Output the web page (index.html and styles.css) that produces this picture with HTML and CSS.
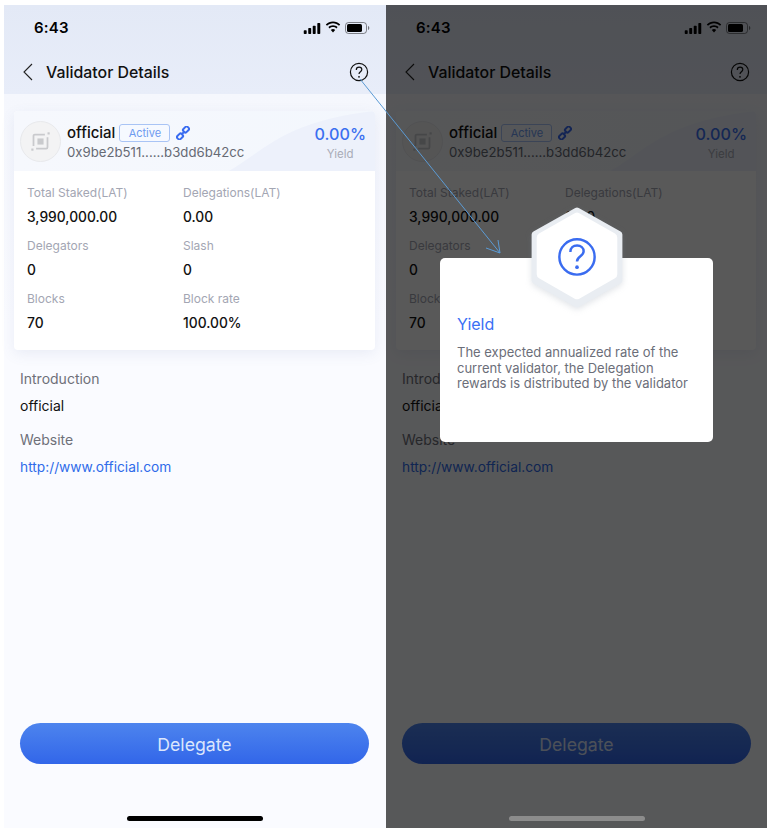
FILE: index.html
```html
<!DOCTYPE html>
<html lang="en">
<head>
<meta charset="utf-8">
<title>Validator Details</title>
<link rel="stylesheet" href="styles.css">
</head>
<body>
<svg class="defs" width="0" height="0" aria-hidden="true">
  <symbol id="signal" viewBox="0 0 18 12"><rect x="0" y="8" width="3.200" height="4" rx=".8"/><rect x="4.900" y="5.500" width="3.200" height="6.500" rx=".8"/><rect x="9.800" y="3" width="3.200" height="9" rx=".8"/><rect x="14.800" y="0" width="3.200" height="12" rx=".8"/></symbol>
  <symbol id="wifi" viewBox="0 0 16 12"><path d="M8 2.300c2.300 0 4.400.9 6 2.400l1.200-1.300C13.300 1.500 10.800.4 8 .4S2.700 1.500.8 3.400L2 4.700c1.600-1.500 3.700-2.400 6-2.400z"/><path d="M8 6c1.300 0 2.500.5 3.400 1.400l1.200-1.300C11.400 4.900 9.800 4.200 8 4.200s-3.400.7-4.600 1.900l1.200 1.300C5.500 6.500 6.700 6 8 6z"/><path d="M8 8c-.9 0-1.600.3-2.200.9L8 11.500l2.200-2.600C9.600 8.300 8.900 8 8 8z"/></symbol>
  <symbol id="battery" viewBox="0 0 25 12"><rect x=".5" y=".5" width="21" height="11" rx="3" fill="none" stroke="currentColor" stroke-opacity=".45"/><rect x="2" y="2" width="15" height="8" rx="1.600"/><path d="M23 4v4c.8-.3 1.300-1.100 1.300-2S23.800 4.300 23 4z" opacity=".5"/></symbol>
  <symbol id="back" viewBox="0 0 12 20"><path d="M10 2 2 10l8 8" fill="none" stroke="currentColor" stroke-width="1.100"/></symbol>
  <symbol id="help" viewBox="0 0 20 20"><circle cx="10" cy="10" r="8.600" fill="none" stroke="currentColor" stroke-width="1.200"/><path d="M7.300 7.900c0-1.600 1.200-2.700 2.800-2.700s2.700 1 2.700 2.400c0 2.300-2.800 2.100-2.800 4.500" fill="none" stroke="currentColor" stroke-width="1.200"/><circle cx="10" cy="14.800" r=".9" fill="currentColor"/></symbol>
  <symbol id="logo" viewBox="0 0 24 24"><path d="M17 4H5.500A1.500 1.500 0 0 0 4 5.500V17M7 20h11.500a1.500 1.500 0 0 0 1.500-1.500V7" fill="none" stroke="currentColor" stroke-width="2"/><rect x="8.500" y="8.500" width="7" height="7"/><rect x="20" y="1.500" width="2.500" height="2.500"/><rect x="1.500" y="20" width="2.500" height="2.500"/></symbol>
  <symbol id="link" viewBox="0 0 14 14"><g fill="none" stroke="currentColor" stroke-width="2"><rect x="7" y="1.300" width="6" height="4.400" rx="1.500" transform="rotate(-45 10 3.500)"/><rect x="1" y="8.300" width="6" height="4.400" rx="1.500" transform="rotate(-45 4 10.500)"/><path d="M5.200 8.800l3.600-3.600"/></g></symbol>
  <symbol id="wave" viewBox="0 0 361 60" preserveAspectRatio="none"><path d="M215 60C250 40 270 10 361 0v60z" fill="#edf1fb"/></symbol>
</svg>

<main class="canvas">
  <section class="phone">
    <header class="top">
      <div class="status">
        <span class="time">6:43</span>
        <span class="status-icons">
          <svg class="ic-signal"><use href="#signal"/></svg>
          <svg class="ic-wifi"><use href="#wifi"/></svg>
          <svg class="ic-battery"><use href="#battery"/></svg>
        </span>
      </div>
      <nav class="nav">
        <svg class="ic-back"><use href="#back"/></svg>
        <h1 class="title">Validator Details</h1>
        <svg class="ic-help"><use href="#help"/></svg>
      </nav>
    </header>
    <div class="content">
      <article class="card">
        <div class="card-head">
          <svg class="wave"><use href="#wave"/></svg>
          <div class="avatar"><svg class="ic-logo"><use href="#logo"/></svg></div>
          <div class="identity">
            <div class="name-row"><span class="name">official</span><span class="badge">Active</span><svg class="ic-link"><use href="#link"/></svg></div>
            <div class="address">0x9be2b511......b3dd6b42cc</div>
          </div>
          <div class="yield"><div class="yield-value">0.00%</div><div class="yield-label">Yield</div></div>
        </div>
        <dl class="stats">
          <div><dt>Total Staked(LAT)</dt><dd>3,990,000.00</dd></div>
          <div><dt>Delegations(LAT)</dt><dd>0.00</dd></div>
          <div><dt>Delegators</dt><dd>0</dd></div>
          <div><dt>Slash</dt><dd>0</dd></div>
          <div><dt>Blocks</dt><dd>70</dd></div>
          <div><dt>Block rate</dt><dd>100.00%</dd></div>
        </dl>
      </article>
      <div class="info">
        <div class="info-label">Introduction</div>
        <div class="info-value">official</div>
        <div class="info-label">Website</div>
        <a class="info-link" href="#">http://www.official.com</a>
      </div>
    </div>
    <button class="delegate" type="button">Delegate</button>
    <div class="home"></div>
  </section>

  <section class="phone">
    <header class="top">
      <div class="status">
        <span class="time">6:43</span>
        <span class="status-icons">
          <svg class="ic-signal"><use href="#signal"/></svg>
          <svg class="ic-wifi"><use href="#wifi"/></svg>
          <svg class="ic-battery"><use href="#battery"/></svg>
        </span>
      </div>
      <nav class="nav">
        <svg class="ic-back"><use href="#back"/></svg>
        <h1 class="title">Validator Details</h1>
        <svg class="ic-help"><use href="#help"/></svg>
      </nav>
    </header>
    <div class="content">
      <article class="card">
        <div class="card-head">
          <svg class="wave"><use href="#wave"/></svg>
          <div class="avatar"><svg class="ic-logo"><use href="#logo"/></svg></div>
          <div class="identity">
            <div class="name-row"><span class="name">official</span><span class="badge">Active</span><svg class="ic-link"><use href="#link"/></svg></div>
            <div class="address">0x9be2b511......b3dd6b42cc</div>
          </div>
          <div class="yield"><div class="yield-value">0.00%</div><div class="yield-label">Yield</div></div>
        </div>
        <dl class="stats">
          <div><dt>Total Staked(LAT)</dt><dd>3,990,000.00</dd></div>
          <div><dt>Delegations(LAT)</dt><dd>0.00</dd></div>
          <div><dt>Delegators</dt><dd>0</dd></div>
          <div><dt>Slash</dt><dd>0</dd></div>
          <div><dt>Blocks</dt><dd>70</dd></div>
          <div><dt>Block rate</dt><dd>100.00%</dd></div>
        </dl>
      </article>
      <div class="info">
        <div class="info-label">Introduction</div>
        <div class="info-value">official</div>
        <div class="info-label">Website</div>
        <a class="info-link" href="#">http://www.official.com</a>
      </div>
    </div>
    <button class="delegate" type="button">Delegate</button>
    <div class="home"></div>
    <div class="scrim"></div>
    <div class="modal">
      <svg class="hex" viewBox="0 0 90 100">
        <polygon class="hex-shadow" points="45,4 86,27 86,72 45,95 4,72 4,27"/>
        <polygon class="hex-face" points="45,10 80,30 80,66 45,86 10,66 10,30"/>
        <g class="hex-mark">
          <circle cx="45" cy="49" r="17.300"/>
          <path d="M38.500 44c0-3.800 2.800-6.300 6.600-6.300 3.700 0 6.400 2.400 6.400 5.700 0 5-6.500 4.700-6.500 10"/>
          <circle class="hex-dot" cx="45" cy="59" r="1.800"/>
        </g>
      </svg>
      <h2 class="modal-title">Yield</h2>
      <p class="modal-text">The expected annualized rate of the current validator, the Delegation rewards is distributed by the validator</p>
    </div>
  </section>

  <svg class="arrow" viewBox="0 0 767 831">
    <path d="M360 79 500 253M486 248l14 5-2-13"/>
  </svg>
</main>
</body>
</html>
```
FILE: styles.css
```css
* { box-sizing: border-box; }
html, body { margin: 0; height: 100%; background: #fff; overflow: hidden; }
body { font-family: Inter, "Liberation Sans", sans-serif; color: #000; }
.defs { position: absolute; }

.canvas { position: relative; display: flex; width: 767px; height: 831px; padding: 5px 0 3px 4px; }
.phone { position: relative; display: flex; flex-direction: column; flex: 0 0 382px; height: 823px; background: linear-gradient(180deg, #f5f7fd 90px, #fafbff 320px); overflow: visible; }
.phone + .phone { flex-basis: 381px; }

.top { height: 89px; background: linear-gradient(180deg, #e3e9f6 0%, #e8edf9 100%); }
.status { display: flex; justify-content: space-between; align-items: center; height: 46px; padding: 0 16px 0 30px; }
.time { font-size: 15px; font-weight: 600; letter-spacing: .2px; margin-top: -1px; }
.status-icons { display: flex; align-items: center; gap: 4px; }
.ic-signal { width: 18px; height: 11px; fill: #000; }
.ic-wifi { width: 16px; height: 12px; fill: #000; margin-top: -2px; }
.ic-battery { width: 25px; height: 12px; fill: #000; color: #000; }

.nav { display: flex; align-items: center; height: 42px; padding: 0 17px 0 18px; }
.ic-back { width: 12px; height: 20px; color: #222; flex: none; }
.title { flex: 1; margin: 0 0 0 12px; font-size: 15.900px; font-weight: 500; color: #111; }
.ic-help { width: 20px; height: 20px; color: #111; flex: none; }

.content { padding: 17px 11px 0 10px; }
.card { background: #fff; border-radius: 4px; box-shadow: 0 4px 14px rgba(90, 110, 170, .1); }
.card-head { position: relative; display: flex; align-items: center; height: 60px; padding: 0 9px 0 6px; border-radius: 4px 4px 0 0; overflow: hidden; background: linear-gradient(90deg, #f6f8fd 0%, #f3f7fd 100%); }
.wave { position: absolute; inset: 0; width: 100%; height: 100%; }
.avatar, .identity, .yield { position: relative; }
.avatar { display: flex; align-items: center; justify-content: center; width: 41px; height: 41px; border-radius: 50%; background: #f3f3f4; border: 1px solid #e8e9ec; flex: none; }
.ic-logo { width: 21px; height: 21px; fill: #c9cacd; color: #c9cacd; }
.identity { flex: 1; margin-left: 6px; padding-top: 1px; }
.name-row { display: flex; align-items: center; height: 20px; }
.name { font-size: 15px; font-weight: 500; color: #111; }
.badge { display: flex; align-items: center; justify-content: center; width: 51px; height: 18px; margin-left: 4px; border: 1px solid #a9c4f5; border-radius: 3px; background: #f6f9ff; font-size: 11px; font-weight: 400; color: #6e9bf0; }
.ic-link { width: 14px; height: 14px; margin-left: 6px; color: #3a6cf0; }
.address { font-size: 13.200px; line-height: 18px; color: #666a74; }
.yield { display: flex; flex-direction: column; align-items: center; margin-top: 2px; }
.yield-value { font-size: 16.200px; font-weight: 500; color: #3a6ff0; line-height: 22px; }
.yield-label { margin-top: 2px; font-size: 11.500px; line-height: 14px; color: #a9acb7; }

.stats { display: grid; grid-template-columns: 156px 1fr; grid-auto-rows: 53px; margin: 0; padding: 13px 13px 14px; height: 179px; }
.stats dt { font-size: 12px; line-height: 18px; color: #a3a6b3; }
.stats dd { margin: 5.500px 0 0; font-size: 13.800px; font-weight: 500; line-height: 18px; color: #111; }

.info { padding: 19px 0 0 6px; }
.info-label { font-size: 14px; line-height: 20px; color: #6e7079; }
.info-value { margin: 7px 0 14px; font-size: 14px; line-height: 20px; color: #111; }
.info-link { display: block; margin-top: 7px; font-size: 13.750px; line-height: 20px; color: #2f6bea; text-decoration: none; }

.delegate { display: block; width: 349px; height: 41px; margin: auto 0 0 16px; padding: 1px 0 0; border: 0; border-radius: 21px; background: linear-gradient(180deg, #4d84ee 0%, #3266e9 100%); font: 400 17.700px Inter, "Liberation Sans", sans-serif; color: #dbe6fc; }
.home { width: 136px; height: 5px; margin: 52px 0 7px 123px; border-radius: 3px; background: #000; flex: none; }
.phone + .phone .home { position: relative; z-index: 1; background: #8c8c8c; }

.scrim { position: absolute; inset: 0; background: rgba(0, 0, 0, .65); }
.modal { position: absolute; left: 54px; top: 253px; width: 273px; height: 184px; padding: 56px 17px 0; background: #fff; border-radius: 5px; }
.hex { position: absolute; left: 91px; top: -51px; width: 92px; height: 102px; overflow: visible; filter: drop-shadow(0 2px 3px rgba(120, 130, 150, .22)); }
.hex-shadow { fill: #e9edf2; stroke: #e9edf2; stroke-width: 7; stroke-linejoin: round; }
.hex-face { fill: #fff; stroke: #fff; stroke-width: 9; stroke-linejoin: round; }
.hex-mark circle, .hex-mark path { fill: none; stroke: #3a6cf0; stroke-width: 2.400; }
.hex-mark .hex-dot { fill: #3a6cf0; stroke: none; }
.modal-title { margin: 0; font-size: 16px; font-weight: 400; line-height: 20px; color: #3a6ff5; }
.modal-text { margin: 11px 0 0; font-size: 13px; line-height: 15.500px; color: #6b6e79; }

.arrow { position: absolute; left: 0; top: 0; width: 767px; height: 831px; pointer-events: none; }
.arrow path { fill: none; stroke: #5b9bd5; stroke-width: 1; }
```
